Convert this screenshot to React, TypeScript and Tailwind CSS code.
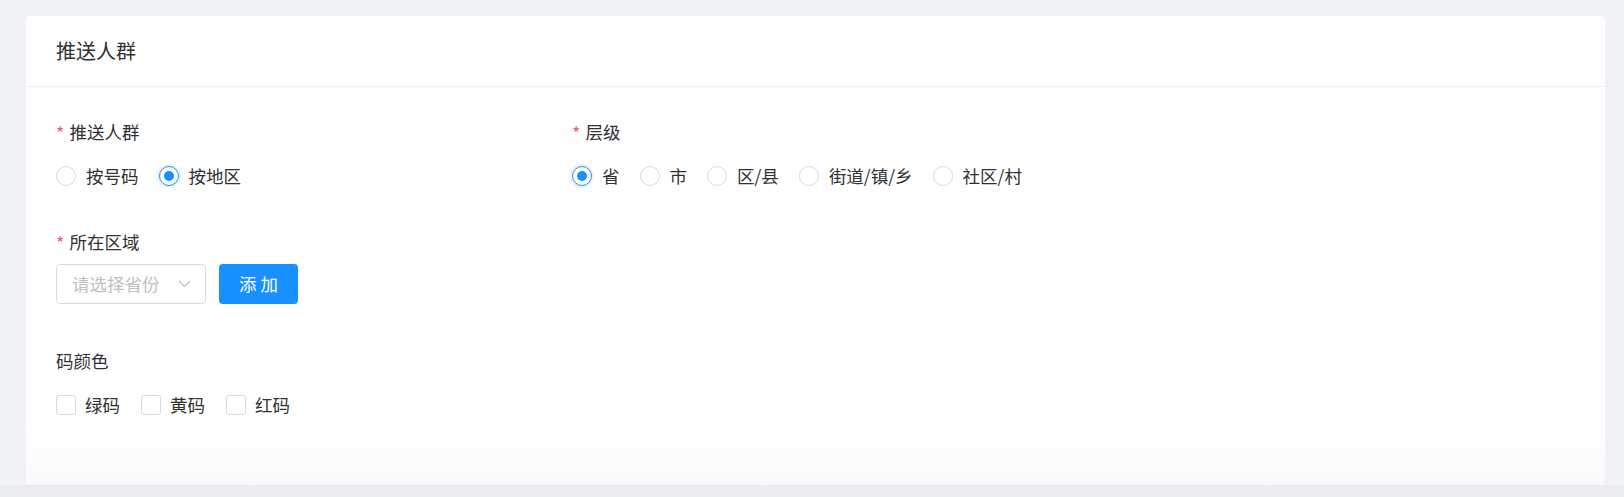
import { useState } from "react";

const font = { fontFamily: '"Noto Sans CJK SC", "Noto Sans", sans-serif' };

const Radio = ({ label, checked, onClick }: { label: string; checked?: boolean; onClick?: () => void }) => {
    return (
        <label className="flex items-center mr-[20px] cursor-pointer" onClick={onClick}>
            <span
                className={
                    checked
                        ? "w-[20px] h-[20px] rounded-full border border-[#1890ff] flex items-center justify-center ring-2 ring-[#e6f4ff]"
                        : "w-[20px] h-[20px] rounded-full border border-[#d9d9d9] bg-white"
                }
            >
                {checked && <span className="w-[10px] h-[10px] rounded-full bg-[#1890ff]"></span>}
            </span>
            <span className="ml-[10px] text-[17.5px] leading-[24px] text-[#303133]">{label}</span>
        </label>
    );
};

const Checkbox = ({ label }: { label: string }) => {
    return (
        <label className="flex items-center mr-[21px] cursor-pointer">
            <span className="w-[20px] h-[20px] rounded-[3px] border border-[#d9d9d9] bg-white"></span>
            <span className="ml-[9px] text-[17.5px] leading-[24px] text-[#303133]">{label}</span>
        </label>
    );
};

const Label = ({ text, required }: { text: string; required?: boolean }) => {
    return (
        <div className="flex items-center text-[17.5px] leading-[24px] text-[#303133]">
            {required && <span className="text-[#f5576c] mr-[5px] text-[18px]">*</span>}
            {text}
        </div>
    );
};

const App = () => {
    // push target: by number / by area
    const [target, setTarget] = useState("area");
    const [level, setLevel] = useState("省");
    const levels = ["省", "市", "区/县", "街道/镇/乡", "社区/村"];

    return (
        <div className="w-[1624px] h-[497px] bg-[#ebecf0] flex flex-col" style={font}>
            <div className="bg-[#f0f2f5] pt-[16px] pl-[26px] pr-[19px] h-[485px]">
                <div className="rounded-[4px] bg-gradient-to-b from-white from-85% to-[#fafafa] h-[469px]">
                    <div className="h-[71px] border-b border-[#ebeef5] px-[30px] flex items-center">
                        <h1 className="text-[20px] text-[#303133]">推送人群</h1>
                    </div>
                    <div className="pl-[30px] pt-[33px]">
                        <div className="flex">
                            <div className="w-[516px]">
                                <Label text="推送人群" required />
                                <div className="flex mt-[20px]">
                                    <Radio label="按号码" checked={target === "number"} onClick={() => setTarget("number")} />
                                    <Radio label="按地区" checked={target === "area"} onClick={() => setTarget("area")} />
                                </div>
                            </div>
                            <div>
                                <Label text="层级" required />
                                <div className="flex mt-[20px]">
                                    {levels.map((l) => (
                                        <Radio key={l} label={l} checked={level === l} onClick={() => setLevel(l)} />
                                    ))}
                                </div>
                            </div>
                        </div>

                        <div className="mt-[42px]">
                            <Label text="所在区域" required />
                            <div className="flex mt-[10px]">
                                <div className="w-[150px] h-[40px] border border-[#d9d9d9] rounded-[4px] flex items-center justify-between pl-[15px] pr-[14px]">
                                    <span className="text-[17.5px] text-[#bfbfbf]">请选择省份</span>
                                    <svg width="13" height="8" viewBox="0 0 13 8" fill="none">
                                        <path d="M1 1l5.5 5.5L12 1" stroke="#bfbfbf" strokeWidth="1.2" />
                                    </svg>
                                </div>
                                <button className="ml-[13px] w-[79px] h-[40px] rounded-[4px] bg-[#1890ff] text-white text-[17.5px]">
                                    添 加
                                </button>
                            </div>
                        </div>

                        <div className="mt-[45px]">
                            <Label text="码颜色" />
                            <div className="flex mt-[20px]">
                                <Checkbox label="绿码" />
                                <Checkbox label="黄码" />
                                <Checkbox label="红码" />
                            </div>
                        </div>
                    </div>
                </div>
            </div>
        </div>
    );
};

export default App;
